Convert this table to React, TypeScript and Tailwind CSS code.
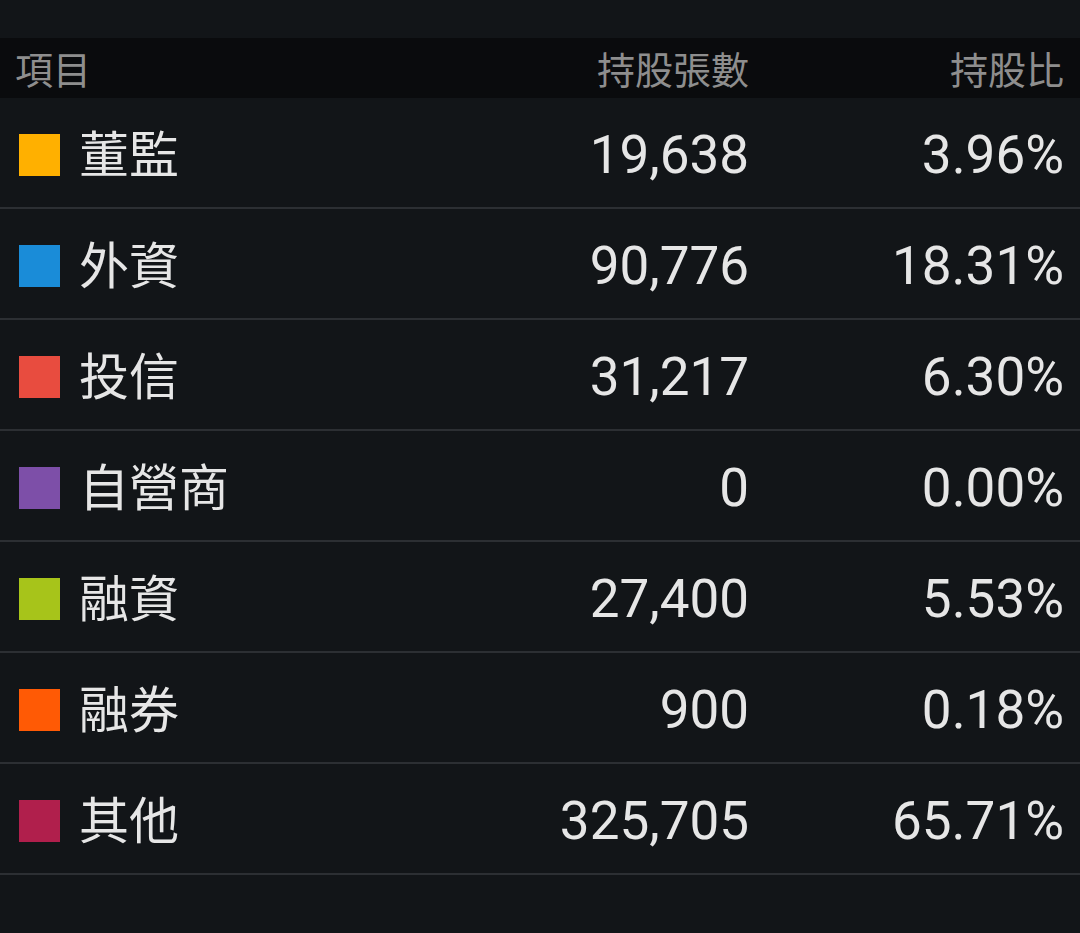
import React from 'react';

const rows = [
  { name: '董監', color: '#ffb000', count: '19,638', pct: '3.96%' },
  { name: '外資', color: '#1a8cd8', count: '90,776', pct: '18.31%' },
  { name: '投信', color: '#e84c3f', count: '31,217', pct: '6.30%' },
  { name: '自營商', color: '#7d4fa8', count: '0', pct: '0.00%' },
  { name: '融資', color: '#a7c41a', count: '27,400', pct: '5.53%' },
  { name: '融券', color: '#ff5a05', count: '900', pct: '0.18%' },
  { name: '其他', color: '#b01f4c', count: '325,705', pct: '65.71%' },
];

export default function App() {
  return (
    <div
      className="w-[1080px] h-[933px] bg-[#121518] pt-[38px] overflow-hidden"
      style={{ fontFamily: 'Roboto, "Noto Sans CJK TC", sans-serif' }}
    >
      {/* header */}
      <div className="h-[60px] bg-[#0a0b0d] grid grid-cols-[1fr_300px_315px] items-center pl-[15px] pr-[16px] pt-[6px] text-[38px] text-[#8e8e8e] leading-none">
        <div>項目</div>
        <div className="text-right">持股張數</div>
        <div className="text-right">持股比</div>
      </div>

      {rows.map((r) => (
        <div
          key={r.name}
          className="h-[111px] border-b-2 border-[#2c2f33] grid grid-cols-[1fr_300px_315px] items-center pl-[19px] pr-[16px] pt-[6px] text-[53px] text-[#e6e6e6] leading-none"
        >
          <div className="flex items-center gap-[19px]">
            <span className="w-[41px] h-[42px] shrink-0 -mt-[2px]" style={{ backgroundColor: r.color }} />
            <span className="text-[50px]">{r.name}</span>
          </div>
          <div className="text-right">{r.count}</div>
          <div className="text-right">{r.pct}</div>
        </div>
      ))}
    </div>
  );
}
